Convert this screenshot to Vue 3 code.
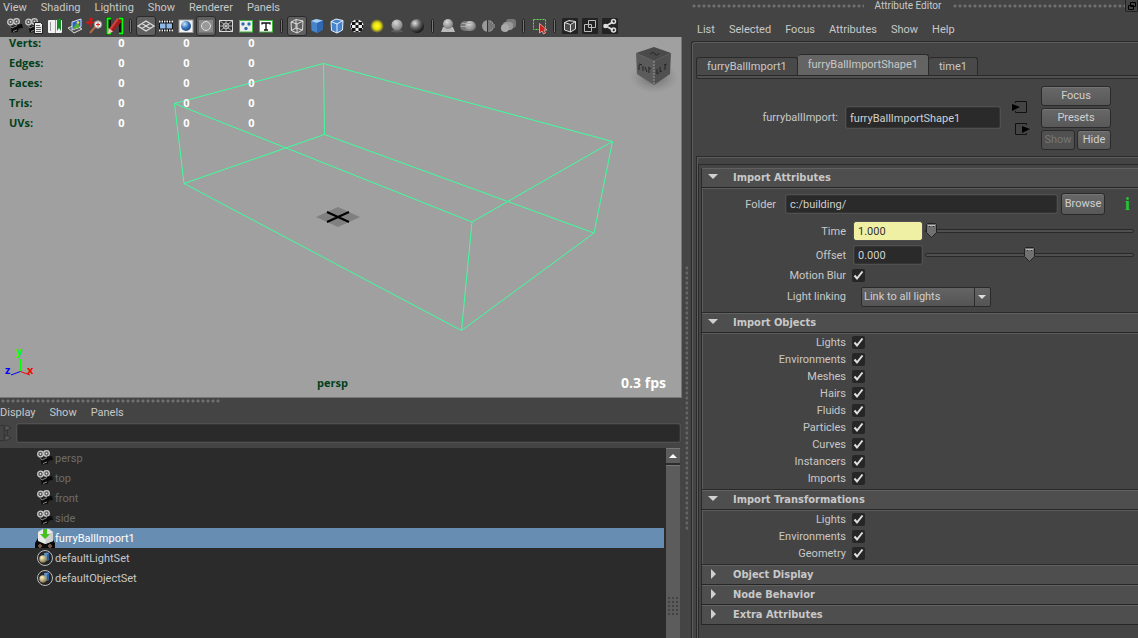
<script setup>
import { ref } from 'vue'

const cam = `<circle cx="5.500" cy="6" r="2.800" fill="#555" stroke="#c8c8c8" stroke-width="1.300"/><circle cx="11.500" cy="5.500" r="2.800" fill="#555" stroke="#c8c8c8" stroke-width="1.300"/><circle cx="5.500" cy="6" r=".9" fill="#ddd"/><circle cx="11.500" cy="5.500" r=".9" fill="#ddd"/><path d="M6 10.500 12.500 8.500 17 8 18 12 14 12.500 12.500 16 6.500 16.500Z" fill="#0c0c0c"/><path d="M4.500 9 7 12 12 9.500M8 15.500 12 14" stroke="#888" fill="none"/>`

const toolGroups = [
  [
    { name: 'Select camera', svg: cam },
    { name: 'Camera attributes', svg: `<g transform="translate(-2 0)">${cam}</g><path d="M9.500 6.500h6l2 2v9h-8z" fill="#eee" stroke="#222"/><path d="M11 9.500h4M11 11.500h5M11 13.500h5M11 15.500h5" stroke="#666"/>` },
    { name: 'Bookmarks', svg: `<rect x="3" y="4" width="14" height="13" rx="1" fill="#f2f2f2"/><path d="M5.500 6v9M10.500 4v13" stroke="#999"/><path d="M12 3h4v12l-2-3-2 3z" fill="#118a22"/>` },
    { name: 'Image plane', svg: `<path d="M3 12 10 9 17 13 9 17Z" fill="#555" stroke="#ddd"/><path d="M7 6 16 3V11L7 14Z" fill="#2a62c8" stroke="#dde"/><path d="M8 12 12 7 15 10V11L8 13.500Z" fill="#53b526"/><circle cx="13" cy="6.500" r="1.300" fill="#f5de3d"/>` },
    { name: 'Pan and zoom', svg: `<path d="M6 2v9M1.500 6.500h9M6 2 4.500 4M6 2 7.500 4M1.500 6.500 3.500 5M1.500 6.500 3.500 8" stroke="#e01212" stroke-width="1.300" fill="none"/><path d="M10 11 5 17" stroke="#b06a45" stroke-width="2"/><circle cx="13" cy="8.500" r="3.700" fill="#eee" stroke="#999"/><path d="M13 6.500v4M11 8.500h4" stroke="#d22"/>` },
    { name: 'Grease pencil', svg: `<path d="M1 1h5v18H1zM14 1h5v18h-5z" fill="#111"/><path d="M6 2.500H2.500v15H6M14 2.500h3.500v15H14" fill="none" stroke="#0bff0b" stroke-width="2"/><path d="M4 13 12 2 17 5 8 16Z" fill="#a31a1c"/><path d="M4 13 12 2 14 3 6 14Z" fill="#c8453f"/><path d="M3.500 12 8 15.500 3 18Z" fill="#e9c9ba"/>` }
  ],
  [
    { name: 'Grid', on: true, svg: `<path d="M2 10 10 5 18 10 10 15ZM6 7.500 14 12.500M14 7.500 6 12.500" fill="none" stroke="#ddd" stroke-width="1.300"/>` },
    { name: 'Film gate', svg: `<rect x="3" y="4" width="14" height="12" fill="#111"/><path d="M3 5.500h14M3 14.500h14" stroke="#eee" stroke-width="2" stroke-dasharray="1.500 1"/><rect x="4" y="7.500" width="5.500" height="5" fill="#8db8e8"/><rect x="10.500" y="7.500" width="5.500" height="5" fill="#8db8e8"/>` },
    { name: 'Resolution gate', svg: `<rect x="3" y="4" width="14" height="12.500" fill="#f2f2f2" stroke="#999"/><circle cx="10" cy="10" r="5" fill="url(#gBlue)"/>` },
    { name: 'Gate mask', on: true, svg: `<rect x="3" y="4" width="14" height="12.500" fill="#888"/><circle cx="10" cy="10" r="4.500" fill="#999" stroke="#ddd"/>` },
    { name: 'Field chart', svg: `<rect x="3.500" y="4.500" width="13" height="11" fill="#333" stroke="#ddd"/><path d="M3 4 17 16M17 4 3 16M10 4v12M3 10h14" stroke="#ccc" stroke-width=".8"/><circle cx="10" cy="10" r="3" fill="none" stroke="#ccc" stroke-width=".8"/>` },
    { name: 'Safe action', svg: `<rect x="3.500" y="4.500" width="13" height="11.500" fill="#eee" stroke="#44bb3c"/><circle cx="7" cy="8" r="1.700" fill="#2f6fa8"/><circle cx="13" cy="8" r="1.700" fill="#2f6fa8"/><circle cx="10" cy="12.500" r="1.700" fill="#2f6fa8"/>` },
    { name: 'Safe title', svg: `<rect x="3.500" y="4.500" width="13" height="11.500" fill="#fff" stroke="#44bb3c"/><path d="M6 8.500V7H14V8.500M10 7v7M8 14h4" fill="none" stroke="#111" stroke-width="1.300"/>` }
  ],
  [
    { name: 'Wireframe', on: true, svg: `<path d="M4 6 9 3.500 16 5 15.500 14 10 17 4.500 14.500ZM4 6 10 8 16 5M10 8v9M9 3.500V12M4.500 14.500 9 12 15.500 14" fill="none" stroke="#ddd"/>` },
    { name: 'Smooth shade', svg: `<path d="M4 5 9 3 16 4.500 15.500 14 10 17 4.500 14.500Z" fill="#4684cd"/><path d="M4 5 9 3 16 4.500 10 7Z" fill="#a6cdf4"/><path d="M10 7 16 4.500 15.500 14 10 17Z" fill="#2e69b1"/>` },
    { name: 'Wireframe on shaded', svg: `<path d="M4 5.500 9 3 16 4.500 15.500 14 10 17 4.500 14.500Z" fill="#4684cd" stroke="#e4f0fc"/><path d="M4 5.500 10 8 16 4.500M10 8v9" fill="none" stroke="#e4f0fc"/>` },
    { name: 'Textured', svg: `<circle cx="10" cy="10" r="6.500" fill="#f0f0f0"/><path d="M8.500 3.500h3v3h-3zM5 6h3.500v3H5zM11.500 6H15v3h-3.500zM8.500 9h3v3h-3zM4 9H5v3H4zM15 9h1.500v3H15zM5 12h3.500v3H5zM11.500 12H15v3h-3.500zM8.500 15h3v1.500h-3z" fill="#111"/>` },
    { name: 'Use all lights', svg: `<circle cx="10" cy="10" r="7" fill="url(#gYellow)"/>` },
    { name: 'Shadows', svg: `<ellipse cx="10" cy="15" rx="6" ry="1.500" fill="#5c5c5c"/><circle cx="10" cy="9" r="5.500" fill="url(#gGrey)"/>` },
    { name: 'High quality', svg: `<circle cx="10" cy="10" r="7" fill="url(#gDark)"/>` }
  ],
  [
    { name: 'Ambient occlusion', svg: `<path d="M3 16 5 11h10l2 5z" fill="#bbb"/><circle cx="10" cy="8" r="5" fill="url(#gGrey)"/>` },
    { name: 'Motion blur', svg: `<rect x="2" y="5" width="16" height="10" rx="5" fill="#777"/><circle cx="12" cy="10" r="5" fill="url(#gGrey)"/><path d="M4 7.500h9M3 10.500h11" stroke="#aaa"/>` },
    { name: 'Multisample', svg: `<circle cx="10" cy="10" r="6" fill="#999"/><path d="M10 4h2v2h2v2h3v4h-3v2h-2v2h-2z" fill="#777"/><path d="M9.500 4v12" stroke="#333"/>` },
    { name: 'Depth of field', svg: `<rect x="8" y="3" width="10" height="9" rx="3" fill="#777"/><rect x="5" y="6" width="10" height="8" rx="3" fill="#999"/><circle cx="7" cy="12" r="4" fill="#aaa"/>` }
  ],
  [{ name: 'Isolate select', svg: `<rect x="4.500" y="3.500" width="12" height="10" fill="none" stroke="#5de04e" stroke-dasharray="2 1"/><path d="M10.500 7.500V17L13 15 14.500 18 16.500 17 15 14H18Z" fill="#cf1f1f" stroke="#eed" stroke-width=".6"/>` }],
  [
    { name: 'X-ray', svg: `<rect x="2" y="2" width="16" height="16" rx="1" fill="#232323"/><path d="M4.500 6.500 9 4.500 15.500 5.500V13L10.500 16 4.500 14ZM4.500 6.500 10.500 8.500 15.500 5.500M10.500 8.500V16" fill="#4b4b4b" stroke="#ddd"/>` },
    { name: 'X-ray joints', svg: `<rect x="2" y="2" width="16" height="16" rx="1" fill="#232323"/><path d="M4.500 8.500h7v7h-7zM8.500 4.500h7v7h-7z" fill="none" stroke="#bbb"/>` },
    { name: 'Share view', svg: `<rect x="2" y="2" width="16" height="16" rx="1" fill="#232323"/><path d="M6 10 13 6M6 10 13 14" stroke="#ddd" stroke-width="2"/><circle cx="5.500" cy="10" r="2.300" fill="#ddd"/><circle cx="13.500" cy="5.500" r="2" fill="none" stroke="#ddd" stroke-width="1.500"/><circle cx="13.500" cy="14" r="2" fill="none" stroke="#ddd" stroke-width="1.500"/>` }
  ]
]

const importIcon = `<path d="M0 20V15L3 10H17L20 15V20Z" fill="#0b0b0b"/><path d="M3 4 8 1H14L18 4V13L10 16 3 13Z" fill="#e9e9e9"/><path d="M10.500 7V16L18 13V4Z" fill="#cfcfcf"/><path d="M8 1h4v5h3l-5 5-5-5h3z" fill="#45c01c"/><circle cx="5" cy="18" r="1.300" fill="none" stroke="#b98670"/><circle cx="15" cy="18" r="1.300" fill="none" stroke="#b98670"/>`
const setIcon = `<circle cx="10" cy="10" r="7.500" fill="#252525" stroke="#bbb"/><path d="M9 5 14 4.500V12L10 13Z" fill="#5d92cb"/><path d="M12 7 14 4.500V12L12 12.500Z" fill="#2f5f96"/><circle cx="8" cy="11" r="3.700" fill="url(#gGold)"/>`

const viewMenus = ['View', 'Shading', 'Lighting', 'Show', 'Renderer', 'Panels']
const outlinerMenus = ['Display', 'Show', 'Panels']
const editorMenus = ['List', 'Selected', 'Focus', 'Attributes', 'Show', 'Help']
const stats = ['Verts:', 'Edges:', 'Faces:', 'Tris:', 'UVs:']
const nodes = [
  { name: 'persp', icon: cam, dim: true },
  { name: 'top', icon: cam, dim: true },
  { name: 'front', icon: cam, dim: true },
  { name: 'side', icon: cam, dim: true },
  { name: 'furryBallImport1', icon: importIcon, selected: true },
  { name: 'defaultLightSet', icon: setIcon },
  { name: 'defaultObjectSet', icon: setIcon }
]
const tabs = ['furryBallImport1', 'furryBallImportShape1', 'time1']
const activeTab = ref(1)
const search = ref('')
const nodeName = ref('furryBallImportShape1')
const folder = ref('c:/building/')
const numbers = ref([
  { label: 'Time', text: '1.000', pos: 0, keyed: true },
  { label: 'Offset', text: '0.000', pos: 50 }
])
const motionBlur = ref(true)
const linking = ref('Link to all lights')
const toggle = (label) => ({ label, on: true })
const checkSections = ref([
  { title: 'Import Objects', items: ['Lights', 'Environments', 'Meshes', 'Hairs', 'Fluids', 'Particles', 'Curves', 'Instancers', 'Imports'].map(toggle) },
  { title: 'Import Transformations', items: ['Lights', 'Environments', 'Geometry'].map(toggle) }
])
const closedSections = ['Object Display', 'Node Behavior', 'Extra Attributes']
</script>

<template>
  <div class="app">
    <svg class="defs" aria-hidden="true">
      <defs>
        <radialGradient id="gBlue" cx=".35" cy=".3" r=".8"><stop offset="0" stop-color="#cfe6ff" /><stop offset=".5" stop-color="#3a78c0" /><stop offset="1" stop-color="#143a70" /></radialGradient>
        <radialGradient id="gYellow"><stop offset="0" stop-color="#ffff20" /><stop offset=".5" stop-color="#e8e010" /><stop offset="1" stop-color="#e8e010" stop-opacity="0" /></radialGradient>
        <radialGradient id="gGrey" cx=".4" cy=".3" r=".8"><stop offset="0" stop-color="#d8d8d8" /><stop offset="1" stop-color="#707070" /></radialGradient>
        <radialGradient id="gDark" cx=".35" cy=".3" r=".7"><stop offset="0" stop-color="#e0e0e0" /><stop offset=".5" stop-color="#666" /><stop offset="1" stop-color="#181818" /></radialGradient>
        <radialGradient id="gGold" cx=".35" cy=".3" r=".8"><stop offset="0" stop-color="#fff3c4" /><stop offset="1" stop-color="#77683a" /></radialGradient>
        <radialGradient id="gShade"><stop offset="0" stop-color="#555" stop-opacity=".8" /><stop offset="1" stop-color="#777" stop-opacity="0" /></radialGradient>
      </defs>
    </svg>

    <main class="workspace">
      <nav class="menus view-menus">
        <button v-for="m in viewMenus" :key="m" class="menu">{{ m }}</button>
      </nav>
      <div class="toolbar">
        <div v-for="(group, gi) in toolGroups" :key="gi" class="group">
          <button v-for="t in group" :key="t.name" class="tool" :class="{ on: t.on }" :aria-label="t.name">
            <svg viewBox="0 0 20 20" v-html="t.svg"></svg>
          </button>
        </div>
      </div>

      <section class="viewport">
        <svg class="scene" viewBox="0 0 681 360" preserveAspectRatio="xMidYMid slice">
          <path class="ground" d="M316 180 338 170 360 180 338 190Z" />
          <path class="cross" d="M327 175 349 185M327 185 349 175" />
          <path class="wire" d="M323.500 26.500 174.500 66.500 184 146.500 324.500 97.500ZM323.500 26.500 612.500 104.500 594 196 324.500 97.500M174.500 66.500 472 185 461.500 293.500 184 146.500M612.500 104.500 472 185M594 196 461.500 293.500" />
          <ellipse cx="654" cy="40" rx="24" ry="16" fill="url(#gShade)" />
          <path d="M636 16 654 10 671 16 654 24Z" fill="#4a4a4a" />
          <path d="M636 16 654 24V48L637 37Z" fill="#5b5b5b" />
          <path d="M671 16 654 24V48L670 37Z" fill="#505050" />
          <path d="M654 24V48" stroke="#999" stroke-dasharray="2 1" />
          <path d="M639 28v5M639 27l3 1M643 29v5M645 30l2 5M649 31v5M648 30l3 2M657 32v5l2-1M660 30v5l2-1M665 28v5M664 28l3-1M650 17q4-3 5 0t4-1" fill="none" stroke="#252525" />
        </svg>
        <table class="stats">
          <tbody>
            <tr v-for="s in stats" :key="s"><th scope="row">{{ s }}</th><td>0</td><td>0</td><td>0</td></tr>
          </tbody>
        </table>
        <svg class="axes" viewBox="0 0 32 32">
          <path d="M18.500 23.500V11" stroke="#0f0" /><path d="M18.500 23.500 9 27" stroke="#00f" /><path d="M18.500 23.500 28 27" stroke="#f00" />
          <text x="14" y="7" fill="#0f0">y</text><text x="3" y="26" fill="#00f">z</text><text x="25" y="26" fill="#f00">x</text>
        </svg>
        <span class="camera">persp</span>
        <span class="fps">0.3 fps</span>
      </section>

      <section class="outliner">
        <div class="grip outliner-grip"></div>
        <nav class="menus">
          <button v-for="m in outlinerMenus" :key="m" class="menu">{{ m }}</button>
        </nav>
        <div class="search">
          <svg viewBox="0 0 14 18" aria-hidden="true"><path d="M0 1.500h4v15H0M7.500 6v5" fill="none" stroke="#343434" /><path d="M5 1 11 4 5 7ZM5 11 11 14 5 17Z" fill="#5a5a5a" stroke="#333" /></svg>
          <input v-model="search" class="field" aria-label="Filter nodes" />
        </div>
        <div class="tree">
          <ul>
            <li v-for="n in nodes" :key="n.name" :class="{ dim: n.dim, selected: n.selected }">
              <svg viewBox="0 0 20 20" aria-hidden="true" v-html="n.icon"></svg><span>{{ n.name }}</span>
            </li>
          </ul>
          <div class="scrollbar">
            <button aria-label="Scroll up"><svg viewBox="0 0 8 4"><path d="M0 4 4 0 8 4Z" fill="#fff" /></svg></button>
            <div class="thumb"><i></i></div>
          </div>
        </div>
      </section>
    </main>

    <aside class="editor">
      <div class="split"><div class="vgrip"></div></div>
      <div class="dock">
        <header class="title">
          <div class="grip"></div><h1>Attribute Editor</h1><div class="grip"></div>
          <button aria-label="Float window"><svg viewBox="0 0 8 8"><path d="M2.500.500h5v4h-5zM.500 3.500h5v4h-5z" fill="#444" stroke="#000" /></svg></button>
        </header>
        <nav class="menus editor-menus">
          <button v-for="m in editorMenus" :key="m" class="menu">{{ m }}</button>
        </nav>
        <div class="frame">
          <div class="tabs">
            <button v-for="(t, i) in tabs" :key="t" :class="{ active: i === activeTab }" @click="activeTab = i">{{ t }}</button>
          </div>
          <div class="tabline"></div>
          <div class="node">
            <label for="node-name">furryballImport:</label>
            <input id="node-name" v-model="nodeName" class="field" />
            <div class="links">
              <button aria-label="Input connection"><svg viewBox="0 0 18 14"><path d="M4.500 3V1.500h11v11h-11V11" fill="none" stroke="#111" /><path d="M1 4 9 7 1 11Z" fill="#000" /></svg></button>
              <button aria-label="Output connection"><svg viewBox="0 0 18 14"><path d="M15.500 3V1.500h-11v11h11V11" fill="none" stroke="#111" /><path d="M11 4 19 7 11 11Z" fill="#000" /></svg></button>
            </div>
            <div class="actions">
              <button class="btn wide">Focus</button>
              <button class="btn wide">Presets</button>
              <button class="btn" disabled>Show</button>
              <button class="btn">Hide</button>
            </div>
          </div>
          <div class="scroll">
            <div class="sections">
              <h2><button class="open">Import Attributes</button></h2>
              <div class="body attributes">
                <div class="row folder">
                  <label for="folder">Folder</label>
                  <input id="folder" v-model="folder" class="field" />
                  <button class="btn">Browse</button>
                  <b class="info">i</b>
                </div>
                <div v-for="n in numbers" :key="n.label" class="row number">
                  <label :for="n.label">{{ n.label }}</label>
                  <input :id="n.label" v-model="n.text" class="field" :class="{ keyed: n.keyed }" />
                  <input v-model="n.pos" type="range" :aria-label="n.label + ' slider'" />
                </div>
                <div class="row check">
                  <label for="blur">Motion Blur</label>
                  <input id="blur" v-model="motionBlur" type="checkbox" />
                </div>
                <div class="row linking">
                  <label for="linking">Light linking</label>
                  <select id="linking" v-model="linking"><option>Link to all lights</option></select>
                </div>
              </div>
              <template v-for="s in checkSections" :key="s.title">
                <h2><button class="open">{{ s.title }}</button></h2>
                <div class="body">
                  <div v-for="c in s.items" :key="c.label" class="row check">
                    <label :for="s.title + c.label">{{ c.label }}</label>
                    <input :id="s.title + c.label" v-model="c.on" type="checkbox" />
                  </div>
                </div>
              </template>
              <h2 v-for="c in closedSections" :key="c"><button>{{ c }}</button></h2>
            </div>
          </div>
        </div>
      </div>
    </aside>
  </div>
</template>

<style>
body { background: #444; }
</style>

<style scoped>
.app, .app * { box-sizing: border-box; }
.app { display: grid; grid-template-columns: minmax(0, 1fr) 456px; height: 100vh; overflow: hidden; background: #444; color: #c8c8c8; font: 11px/16px Roboto, "Open Sans", sans-serif; }
.defs { position: absolute; width: 0; height: 0; }
button { margin: 0; padding: 0; border: 0; background: none; color: inherit; font: inherit; }
svg { display: block; }
input { margin: 0; font: inherit; color: inherit; outline: 0; min-width: 0; }
h1, h2, ul { margin: 0; padding: 0; font: inherit; list-style: none; }

.menus { display: flex; gap: 14px; }
.menu { padding-top: 1px; white-space: nowrap; }
.workspace { display: flex; flex-direction: column; min-width: 0; min-height: 0; }
.view-menus { padding-left: 3px; height: 16px; line-height: 14px; }
.view-menus .menu { height: 15px; }
.toolbar { display: flex; padding-left: 5px; height: 21px; border-left: 1px solid #222; margin-left: -1px; }
.group { display: flex; }
.group + .group::before { content: ""; width: 1px; height: 12px; margin: 3px 4px; border: 1px solid #202020; border-radius: 2px; background: #777; }
.tool { width: 20px; height: 20px; border-radius: 3px; }
.tool.on { background: #606060; box-shadow: inset 0 0 0 1px #2b2b2b; }
.tool svg { width: 20px; height: 20px; }

.viewport { position: relative; flex: 1; min-height: 0; background: #a0a0a0; border-right: 1px solid #777; border-bottom: 1px solid #777; font-family: "Open Sans", "Noto Sans", sans-serif; }
.scene { position: absolute; inset: 0; width: 100%; height: 100%; }
.ground { fill: #808080; }
.cross { stroke: #000; stroke-width: 2; }
.wire { fill: none; stroke: #3cff9c; stroke-width: 1; }
.stats { position: absolute; left: 9px; top: -4px; border-spacing: 0; font-weight: bold; }
.stats th, .stats td { height: 20px; padding: 0; line-height: 20px; }
.stats th { width: 80px; text-align: left; color: #00401c; }
.stats td { width: 65px; text-align: center; color: #fff; }
.axes { position: absolute; left: 2px; bottom: 17px; width: 32px; height: 32px; overflow: visible; font-weight: bold; }
.camera { position: absolute; left: 0; right: 16px; bottom: 6px; text-align: center; font-weight: bold; color: #00401c; }
.fps { position: absolute; right: 15px; bottom: 6px; font-size: 14px; font-weight: bold; color: #fff; }

.grip { height: 6px; background: radial-gradient(circle at 3px 3px, #707070 1px, transparent 2px) 0 0 / 5px 6px, #444; }
.outliner { display: flex; flex-direction: column; height: 240px; }
.outliner-grip { width: 220px; }
.outliner .menu { height: 16px; }
.field { background: #2a2a2a; border: 1px solid #353535; box-shadow: 0 0 0 1px #505050; border-radius: 2px; color: #d0d0d0; padding: 1px 3px 0; }
.search { display: flex; gap: 3px; padding: 4px 2px 6px 0; }
.search svg { width: 14px; height: 18px; }
.search .field { flex: 1; height: 18px; }
.tree { display: flex; flex: 1; min-height: 0; margin-right: 2px; background: #2b2b2b; }
.tree ul { flex: 1; }
.tree li { display: flex; align-items: center; height: 20px; padding-left: 35px; }
.tree li svg { width: 20px; height: 20px; }
.tree li span { padding-top: 2px; }
.tree .dim { color: #6b6b6b; }
.tree .selected { background: #688db2; color: #fff; }
.scrollbar { display: flex; flex-direction: column; gap: 2px; width: 16px; padding-left: 2px; }
.scrollbar button { display: flex; justify-content: center; align-items: center; height: 15px; background: #5c5c5c; border-top: 1px solid #777; }
.scrollbar svg { width: 8px; height: 4px; }
.thumb { flex: 1; display: flex; align-items: flex-end; justify-content: center; padding-bottom: 22px; background: #5c5c5c; border-top: 1px solid #777; }
.thumb i { width: 12px; height: 20px; background: radial-gradient(circle at 2px 2px, #424242 1px, transparent 1px) 0 0 / 4px 4px; }

.editor { display: flex; min-height: 0; }
.split { display: flex; align-items: center; width: 9px; padding: 0 3px; }
.vgrip { width: 4px; height: 264px; margin-top: 158px; background: radial-gradient(circle at 2px 2px, #666 1px, transparent 2px) 0 0 / 4px 5px; }
.dock { flex: 1; min-width: 0; display: flex; flex-direction: column; }
.title { display: flex; align-items: center; height: 12px; }
.title h1 { padding: 0 11px; line-height: 12px; font-size: 10px; white-space: nowrap; }
.title .grip { flex: 1; }
.title button { display: flex; align-items: center; justify-content: center; width: 13px; height: 12px; border: 1px solid #222; border-top: 0; border-radius: 0 0 2px 2px; }
.title svg { width: 8px; height: 8px; }
.editor-menus { padding: 9px 6px 3px; height: 29px; line-height: 16px; }
.editor-menus .menu { height: 17px; }
.frame { flex: 1; min-height: 0; display: flex; flex-direction: column; border: 1px solid #2a2a2a; border-width: 1px 0 0 1px; border-radius: 3px 0 0 0; box-shadow: inset 1px 1px 0 #5c5c5c; padding: 12px 0 0 4px; }
.tabs { display: flex; align-items: flex-end; }
.tabs button { height: 18px; padding: 0 10px; line-height: 16px; border: 1px solid #2a2a2a; border-width: 1px 1px 0 1px; border-radius: 3px 3px 0 0; background: #494949; }
.tabs button + button { border-left: 0; }
.tabs .active { height: 21px; line-height: 20px; background: #646464; }
.tabline { height: 4px; border: 1px solid #2a2a2a; border-right: 0; border-radius: 2px 0 0 2px; background: #505050; }
.node { display: flex; align-items: center; height: 77px; padding: 0 27px 0 0; }
.node label { width: 142px; padding-top: 1px; text-align: right; }
.node .field { flex: 1; height: 21px; margin: 0 11px 0 8px; }
.links { display: grid; gap: 8px; width: 30px; }
.links svg { width: 18px; height: 14px; overflow: visible; }
.actions { display: grid; grid-template-columns: 1fr 1fr; gap: 2px; width: 70px; }
.btn { height: 20px; line-height: 18px; border: 1px solid #2a2a2a; border-radius: 3px; background: linear-gradient(#686868, #585858); box-shadow: inset 0 1px 0 #757575; color: #d0d0d0; text-align: center; }
.btn:disabled { background: #505050; color: #777; box-shadow: none; }
.wide { grid-column: span 2; }
.scroll { flex: 1; min-height: 0; border: 1px solid #2a2a2a; border-width: 1px 0 0 1px; box-shadow: inset 1px 1px 0 #5c5c5c; padding: 7px 0 0 1px; overflow: hidden; }
.sections { border: 1px solid #2a2a2a; border-width: 1px 0 0 1px; padding: 3px 0 0 2px; height: 100%; }
.sections h2 { height: 20px; border-left: 1px solid #2a2a2a; border-bottom: 1px solid #262626; }
.sections h2 button { position: relative; display: block; width: 100%; height: 19px; padding: 0 0 1px 31px; border-top: 1px solid #616161; background: #4e4e4e; font: bold 11px/17px "DejaVu Sans Condensed", "DejaVu Sans", sans-serif; text-align: left; }
.sections h2 button::before { content: ""; position: absolute; left: 9px; top: 3px; border: 5px solid transparent; border-left: 5px solid #d0d0d0; border-right: 0; }
.sections h2 .open::before { left: 6px; top: 5px; border: 5px solid transparent; border-top: 5px solid #d0d0d0; border-bottom: 0; }
.body { padding: 1px 0 2px; border: 1px solid #2a2a2a; border-width: 0 0 1px 1px; box-shadow: inset 1px 1px 0 #5c5c5c; }
.attributes { padding: 3px 0; }
.row { display: flex; align-items: center; }
.row label { flex: none; width: 144px; padding-top: 1px; text-align: right; }
.check { height: 17px; }
.folder { height: 26px; margin-bottom: 2px; padding-right: 7px; }
.folder label { width: 74px; }
.folder .field { flex: 1; height: 18px; margin: 0 4px 0 10px; }
.folder .btn { width: 44px; height: 22px; }
.info { width: 26px; padding-left: 20px; color: #22c832; font: bold 18px/20px "Liberation Serif", serif; }
.number { height: 24px; }
.number .field { width: 68px; height: 18px; margin: 0 3px 0 8px; }
.number .keyed { background: #f0f0a4; border-color: #f0f0a4; color: #333; }
.linking { height: 25px; }
input[type="checkbox"] { appearance: none; width: 13px; height: 13px; margin-left: 6px; border-radius: 2px; background: #262626 url("data:image/svg+xml,%3Csvg xmlns='http://www.w3.org/2000/svg' viewBox='0 0 13 13'%3E%3Cpath d='M2.500 6.500 5 9.500 10.500 2.500' fill='none' stroke='%23e0e0e0' stroke-width='2'/%3E%3C/svg%3E"); }
input[type="range"] { appearance: none; flex: 1; height: 16px; margin-right: 4px; background: none; }
input[type="range"]::-webkit-slider-runnable-track { height: 4px; border: 1px solid #292929; border-radius: 2px; background: #505050; }
input[type="range"]::-webkit-slider-thumb { appearance: none; width: 11px; height: 15px; margin-top: -7px; background: url("data:image/svg+xml,%3Csvg xmlns='http://www.w3.org/2000/svg' viewBox='0 0 11 15'%3E%3Cpath d='M.5 1.500 1.500.5h8l1 1v8l-5 5-5-5z' fill='%23707070' stroke='%23222'/%3E%3Cpath d='M2 2.500h7' stroke='%23bbb'/%3E%3Cpath d='M3.500 3v1M7.500 3v1' stroke='%23333'/%3E%3C/svg%3E"); }
select { appearance: none; width: 130px; height: 20px; margin-left: 15px; padding: 1px 20px 0 2px; border: 1px solid #2a2a2a; border-radius: 2px; color: #d0d0d0; font: inherit; outline: 0; background: url("data:image/svg+xml,%3Csvg xmlns='http://www.w3.org/2000/svg' viewBox='0 0 16 18'%3E%3Cpath d='M.5 0v18' stroke='%232a2a2a'/%3E%3Cpath d='M4 7h8l-4 4z' fill='%23ddd'/%3E%3C/svg%3E") right / 16px 18px no-repeat, linear-gradient(#646464, #545454); }
</style>
